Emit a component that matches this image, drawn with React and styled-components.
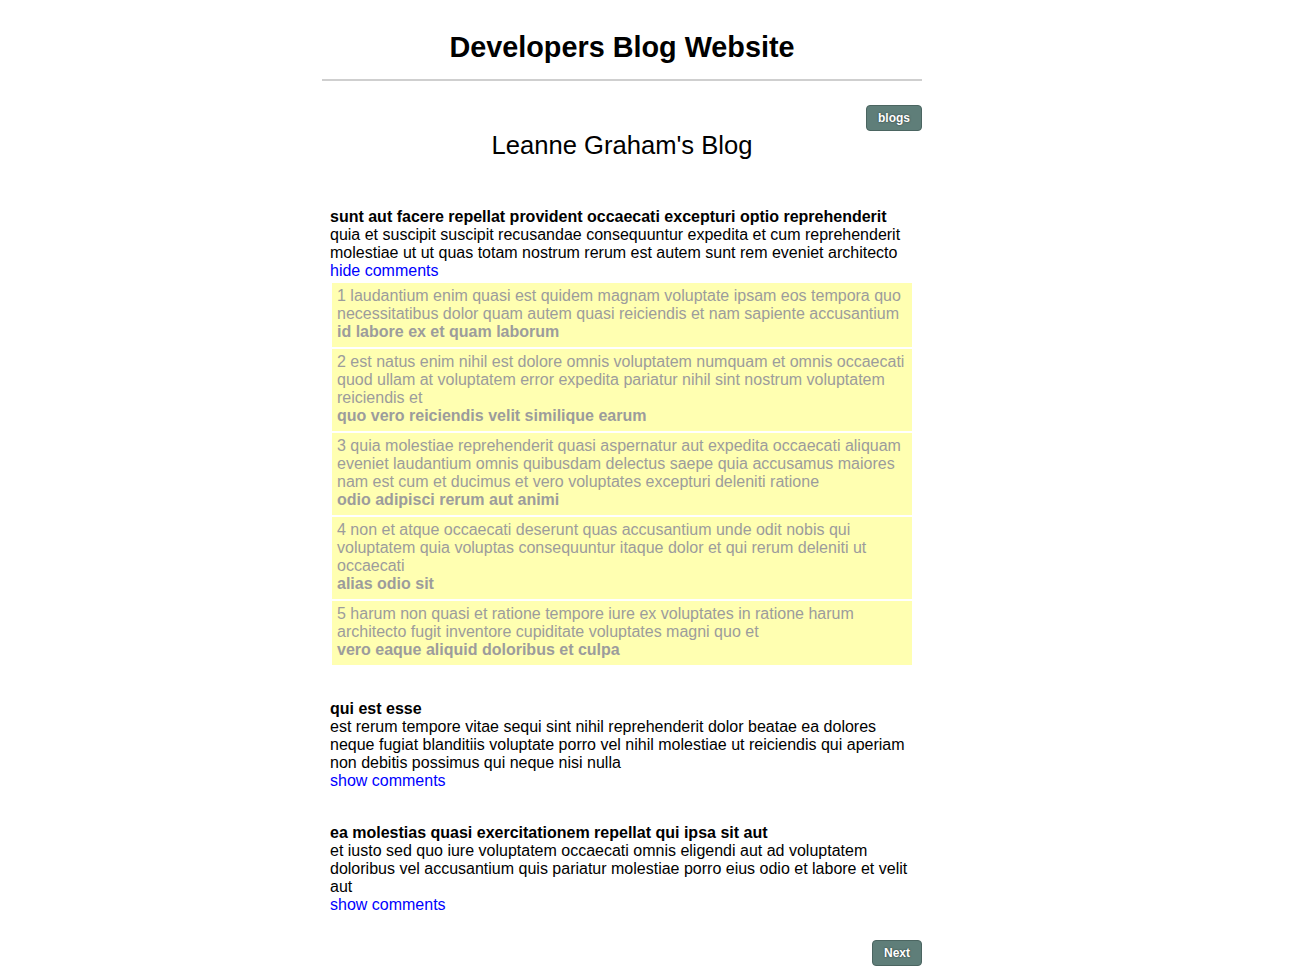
import React, { useState } from 'react'
import styled, { createGlobalStyle } from 'styled-components'

const GlobalStyle = createGlobalStyle`
  body {
    margin: 0;
    background: #fff;
    font-family: "Liberation Sans", Arial, Helvetica, sans-serif;
    font-size: 16px;
    line-height: 18px;
    color: #000;
  }
`

const Page = styled.div`
  width: 600px;
  margin-left: 322px;
  padding-bottom: 4px;
`

const Header = styled.header`
  padding-top: 30px;
  padding-bottom: 15px;
  border-bottom: 2px solid #cfcfcf;
  text-align: center;
`

const SiteTitle = styled.h1`
  margin: 0;
  font-size: 28.8px;
  line-height: 34px;
  font-weight: bold;
`

const Toolbar = styled.div`
  display: flex;
  justify-content: flex-end;
  margin-top: 24px;
`

const Button = styled.button`
  height: 26px;
  padding: 0 ${p => p.$pad || 11}px;
  background: #5f7e79;
  border: 1px solid #4b6561;
  border-radius: 4px;
  color: #fff;
  font-family: "Liberation Sans", Arial, sans-serif;
  font-size: 12px;
  font-weight: bold;
  text-shadow: 0 0 2px rgba(0, 0, 0, 0.6);
  cursor: pointer;
`

const BlogTitle = styled.h2`
  margin: 0;
  font-size: 25.6px;
  line-height: 29px;
  font-weight: normal;
  text-align: center;
`

const PostList = styled.div`
  display: flex;
  flex-direction: column;
  gap: 34px;
  margin-top: 48px;
`

const Post = styled.article`
  padding: 0 8px;
`

const PostTitle = styled.div`
  font-weight: bold;
`

const PostBody = styled.div``

const Toggle = styled.a`
  color: #0000ff;
  text-decoration: none;
  cursor: pointer;
`

const Comments = styled.div`
  margin: 3px 2px 1px;
  display: flex;
  flex-direction: column;
  gap: 2px;
`

const Comment = styled.div`
  background: #ffffb1;
  color: #9c9c9c;
  padding: 4px 5px 6px;
`

const CommentName = styled.div`
  font-weight: bold;
`

const Footer = styled.div`
  display: flex;
  justify-content: flex-end;
  margin-top: 26px;
`

const posts = [
  {
    id: 1,
    title: 'sunt aut facere repellat provident occaecati excepturi optio reprehenderit',
    body: 'quia et suscipit suscipit recusandae consequuntur expedita et cum reprehenderit molestiae ut ut quas totam nostrum rerum est autem sunt rem eveniet architecto',
    comments: [
      { body: 'laudantium enim quasi est quidem magnam voluptate ipsam eos tempora quo necessitatibus dolor quam autem quasi reiciendis et nam sapiente accusantium', name: 'id labore ex et quam laborum' },
      { body: 'est natus enim nihil est dolore omnis voluptatem numquam et omnis occaecati quod ullam at voluptatem error expedita pariatur nihil sint nostrum voluptatem reiciendis et', name: 'quo vero reiciendis velit similique earum' },
      { body: 'quia molestiae reprehenderit quasi aspernatur aut expedita occaecati aliquam eveniet laudantium omnis quibusdam delectus saepe quia accusamus maiores nam est cum et ducimus et vero voluptates excepturi deleniti ratione', name: 'odio adipisci rerum aut animi' },
      { body: 'non et atque occaecati deserunt quas accusantium unde odit nobis qui voluptatem quia voluptas consequuntur itaque dolor et qui rerum deleniti ut occaecati', name: 'alias odio sit' },
      { body: 'harum non quasi et ratione tempore iure ex voluptates in ratione harum architecto fugit inventore cupiditate voluptates magni quo et', name: 'vero eaque aliquid doloribus et culpa' },
    ],
  },
  {
    id: 2,
    title: 'qui est esse',
    body: 'est rerum tempore vitae sequi sint nihil reprehenderit dolor beatae ea dolores neque fugiat blanditiis voluptate porro vel nihil molestiae ut reiciendis qui aperiam non debitis possimus qui neque nisi nulla',
    comments: [],
  },
  {
    id: 3,
    title: 'ea molestias quasi exercitationem repellat qui ipsa sit aut',
    body: 'et iusto sed quo iure voluptatem occaecati omnis eligendi aut ad voluptatem doloribus vel accusantium quis pariatur molestiae porro eius odio et labore et velit aut',
    comments: [],
  },
]

export default function App() {
  const [open, setOpen] = useState({ 1: true })

  const toggle = id => setOpen(o => ({ ...o, [id]: !o[id] }))

  return (
    <Page>
      <GlobalStyle />
      <Header>
        <SiteTitle>Developers Blog Website</SiteTitle>
      </Header>
      <Toolbar>
        <Button $pad={11}>blogs</Button>
      </Toolbar>
      <BlogTitle>Leanne Graham's Blog</BlogTitle>
      <PostList>
        {posts.map(post => (
          <Post key={post.id}>
            <PostTitle>{post.title}</PostTitle>
            <PostBody>{post.body}</PostBody>
            <Toggle onClick={() => toggle(post.id)}>
              {open[post.id] ? 'hide comments' : 'show comments'}
            </Toggle>
            {open[post.id] && (
              <Comments>
                {post.comments.map((c, i) => (
                  <Comment key={i}>
                    {i + 1} {c.body}
                    <CommentName>{c.name}</CommentName>
                  </Comment>
                ))}
              </Comments>
            )}
          </Post>
        ))}
      </PostList>
      <Footer>
        <Button $pad={11}>Next</Button>
      </Footer>
    </Page>
  )
}
